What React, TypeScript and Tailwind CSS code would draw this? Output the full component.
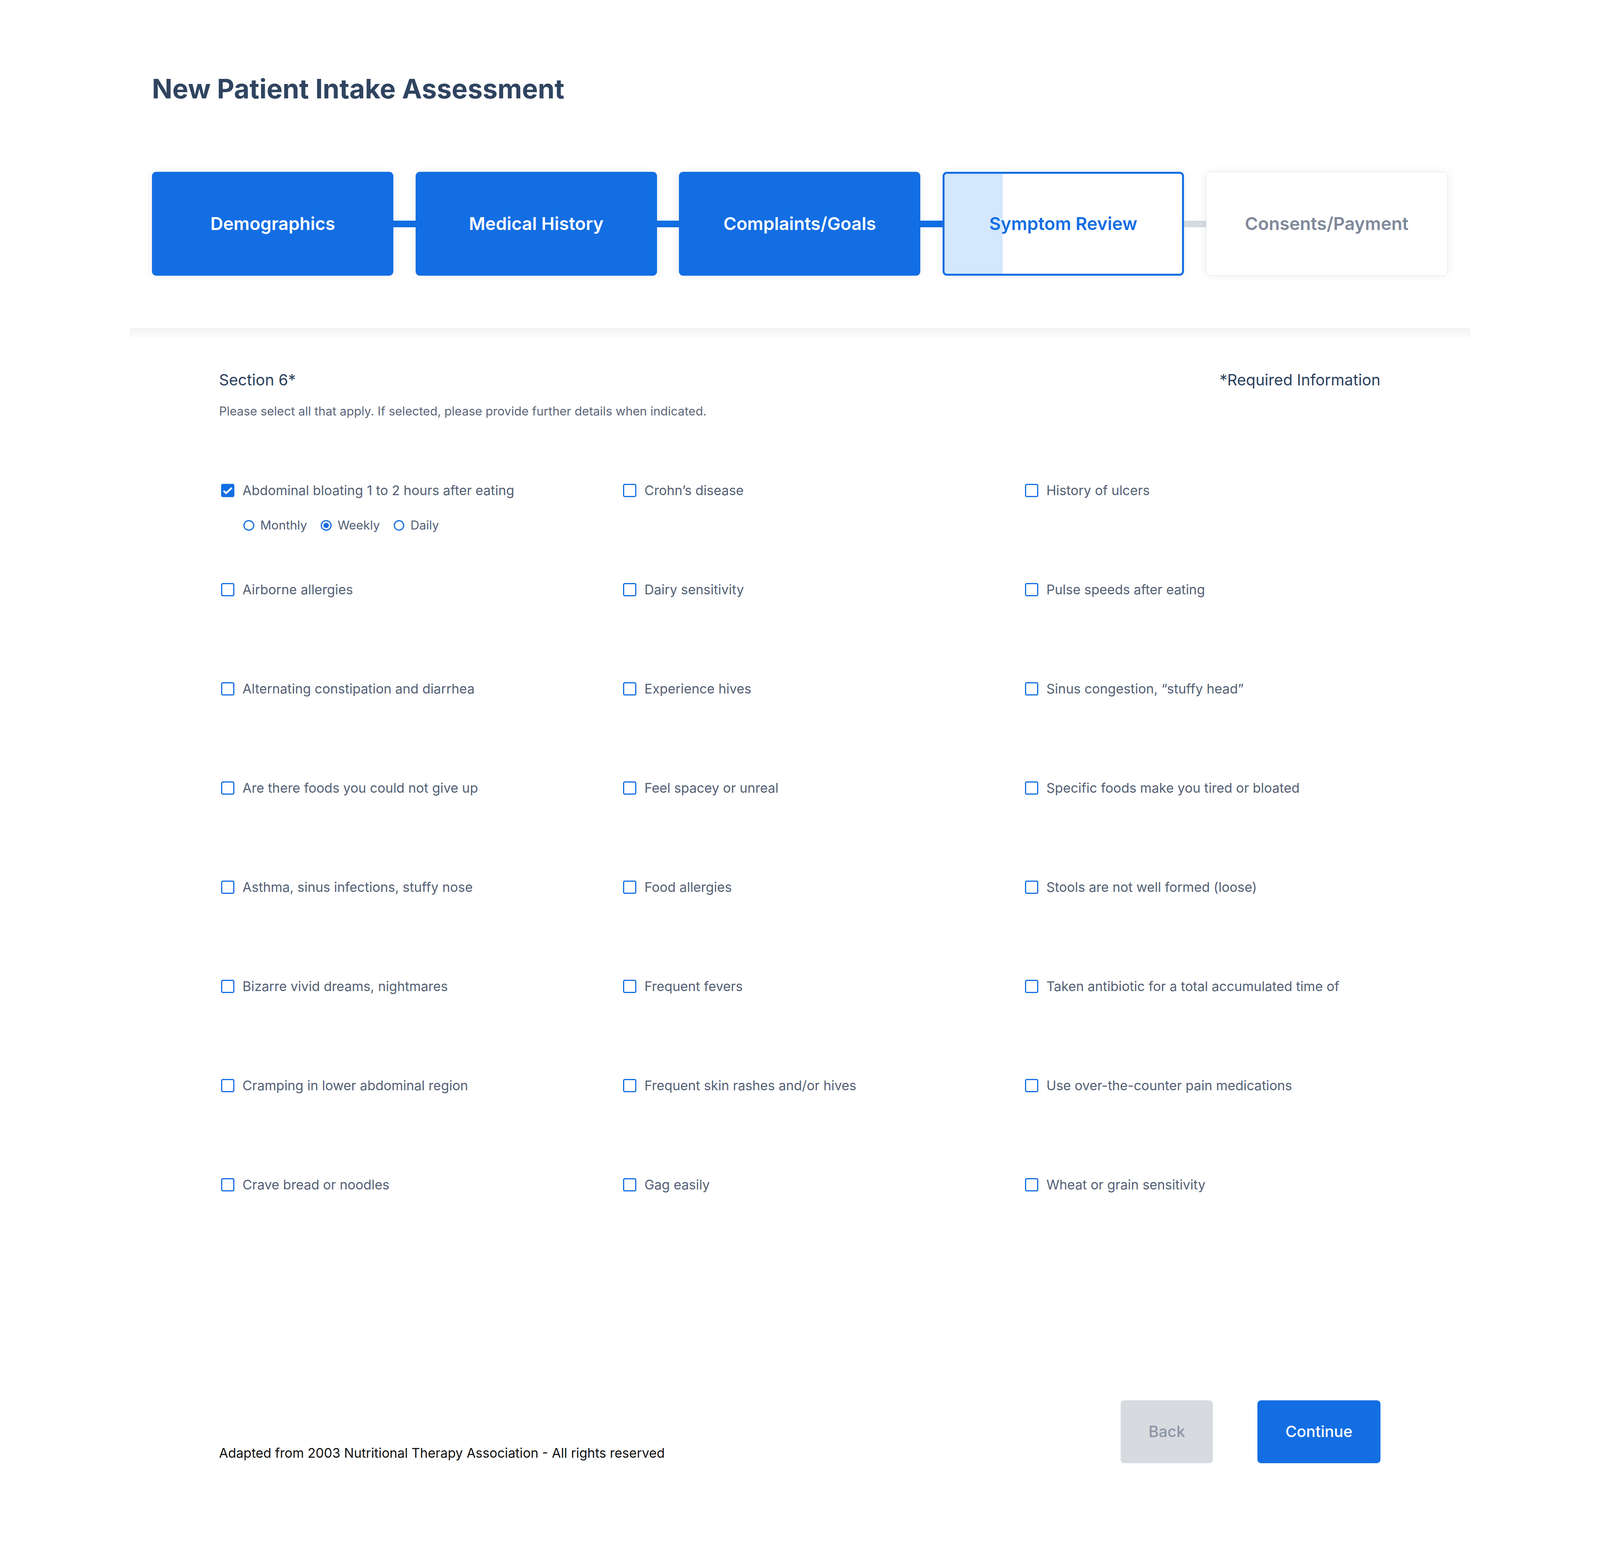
import React from "react";

const col1 = [
  "Abdominal bloating 1 to 2 hours after eating",
  "Airborne allergies",
  "Alternating constipation and diarrhea",
  "Are there foods you could not give up",
  "Asthma, sinus infections, stuffy nose",
  "Bizarre vivid dreams, nightmares",
  "Cramping in lower abdominal region",
  "Crave bread or noodles",
];
const col2 = [
  "Crohn’s disease",
  "Dairy sensitivity",
  "Experience hives",
  "Feel spacey or unreal",
  "Food allergies",
  "Frequent fevers",
  "Frequent skin rashes and/or hives",
  "Gag easily",
];
const col3 = [
  "History of ulcers",
  "Pulse speeds after eating",
  "Sinus congestion, “stuffy head”",
  "Specific foods make you tired or bloated",
  "Stools are not well formed (loose)",
  "Taken antibiotic for a total accumulated time of",
  "Use over-the-counter pain medications",
  "Wheat or grain sensitivity",
];

function Checkbox({ checked }: { checked?: boolean }) {
  if (checked) {
    return (
      <span className="flex h-[0.828vw] w-[0.828vw] shrink-0 items-center justify-center rounded-[0.11vw] bg-[#136ee3]">
        <svg className="h-full w-full" viewBox="0 0 53 53" fill="none">
          <path d="M10 28 L20 37.5 L43 16" stroke="#ffffff" strokeWidth="7" />
        </svg>
      </span>
    );
  }
  return (
    <span className="block h-[0.828vw] w-[0.828vw] shrink-0 rounded-[0.11vw] border-[0.094vw] border-[#136ee3] bg-white" />
  );
}

function Radio({ label, checked }: { label: string; checked?: boolean }) {
  return (
    <div className="flex h-[1.075vh] items-center gap-[0.375vw]">
      <span className="flex h-[0.672vw] w-[0.672vw] items-center justify-center rounded-full border-[0.078vw] border-[#136ee3] bg-white">
        {checked && <span className="block h-[0.33vw] w-[0.33vw] rounded-full bg-[#136ee3]" />}
      </span>
      <span className="text-[0.766vw] leading-[1.075vh] text-[#535f74]">{label}</span>
    </div>
  );
}

function Item({ label, checked, radios }: { label: string; checked?: boolean; radios?: boolean }) {
  return (
    <div className="flex flex-col">
      <div className="flex h-[1.325vh] items-center gap-[0.5vw]">
        <Checkbox checked={checked} />
        <span className="whitespace-nowrap text-[0.828vw] leading-[1.325vh] text-[#535f74]">{label}</span>
      </div>
      {radios && (
        <div className="mt-[1.05vh] flex items-center gap-[0.86vw] pl-[1.39vw]">
          <Radio label="Monthly" />
          <Radio label="Weekly" checked />
          <Radio label="Daily" />
        </div>
      )}
    </div>
  );
}

function Connector({ active }: { active: boolean }) {
  return (
    <div className={active ? "h-[0.425vh] w-[1.375vw] bg-[#136ee3]" : "h-[0.425vh] w-[1.375vw] bg-[#d6dbe2]"} />
  );
}

function DoneStep({ label }: { label: string }) {
  return (
    <div className="flex h-[6.65vh] w-[15.094vw] items-center justify-center rounded-[0.266vw] bg-[#136ee3] shadow-[0_0_0.56vw_rgba(15,23,42,0.07)]">
      <span className="text-[1.109vw] font-semibold leading-none text-white">{label}</span>
    </div>
  );
}

export default function App() {
  return (
    <div className="h-screen w-full overflow-hidden bg-white font-['Inter',sans-serif]">
      <div className="pl-[9.5vw] pt-[4.35vh]">
        <h1 className="text-[1.672vw] font-bold leading-[2.7vh] text-[#2f4460]">New Patient Intake Assessment</h1>
        <div className="mt-[3.95vh] flex items-center">
          <DoneStep label="Demographics" />
          <Connector active />
          <DoneStep label="Medical History" />
          <Connector active />
          <DoneStep label="Complaints/Goals" />
          <Connector active />
          <div className="flex h-[6.65vh] w-[15.094vw] items-center justify-center rounded-[0.266vw] border-[0.125vw] border-[#136ee3] bg-[linear-gradient(to_right,#d3e7fd_3.64vw,#ffffff_3.64vw)] shadow-[0_0_0.56vw_rgba(15,23,42,0.07)]">
            <span className="text-[1.109vw] font-semibold leading-none text-[#136ee3]">Symptom Review</span>
          </div>
          <Connector active={false} />
          <div className="flex h-[6.65vh] w-[15.094vw] items-center justify-center rounded-[0.266vw] border-[0.047vw] border-[#dde1e7] bg-white shadow-[0_0_0.56vw_rgba(15,23,42,0.07)]">
            <span className="text-[1.109vw] font-semibold leading-none text-[#7e889a]">Consents/Payment</span>
          </div>
        </div>
      </div>

      <div className="ml-[8.125vw] mt-[3.35vh] h-[0.75vh] w-[83.75vw] bg-linear-to-b from-[#f1f2f4] to-white" />

      <div className="ml-[13.69vw] w-[72.59vw]">
        <div className="mt-[1.8vh] flex items-start justify-between">
          <div>
            <div className="text-[0.969vw] leading-[1.55vh] text-[#2b3f5c]">Section 6*</div>
            <div className="mt-[0.625vh] text-[0.758vw] leading-[1.2125vh] text-[#5b6579]">
              Please select all that apply. If selected, please provide further details when indicated.
            </div>
          </div>
          <div className="text-[0.969vw] leading-[1.55vh] text-[#2b3f5c]">*Required Information</div>
        </div>

        <div className="ml-[0.14vw] mt-[3.79vh] grid grid-flow-col grid-cols-[repeat(3,22.31vw)] grid-rows-[repeat(8,6.35vh)] gap-x-[2.81vw]">
          {col1.map((l, i) => (
            <Item key={l} label={l} checked={i === 0} radios={i === 0} />
          ))}
          {col2.map((l) => (
            <Item key={l} label={l} />
          ))}
          {col3.map((l) => (
            <Item key={l} label={l} />
          ))}
        </div>

        <div className="mt-[8.125vh] flex items-end justify-between">
          <div className="text-[0.82vw] leading-[1.3125vh] text-[#111111]">
            Adapted from 2003 Nutritional Therapy Association - All rights reserved
          </div>
          <div className="flex items-center gap-[2.78vw]">
            <button className="flex h-[4.025vh] w-[5.766vw] items-center justify-center rounded-[0.22vw] bg-[#d7dadf] text-[0.969vw] font-medium leading-none text-[#8c95a6]">
              Back
            </button>
            <button className="flex h-[4.025vh] w-[7.69vw] items-center justify-center rounded-[0.22vw] bg-[#136ee3] text-[0.969vw] font-medium leading-none text-white">
              Continue
            </button>
          </div>
        </div>
      </div>
    </div>
  );
}
